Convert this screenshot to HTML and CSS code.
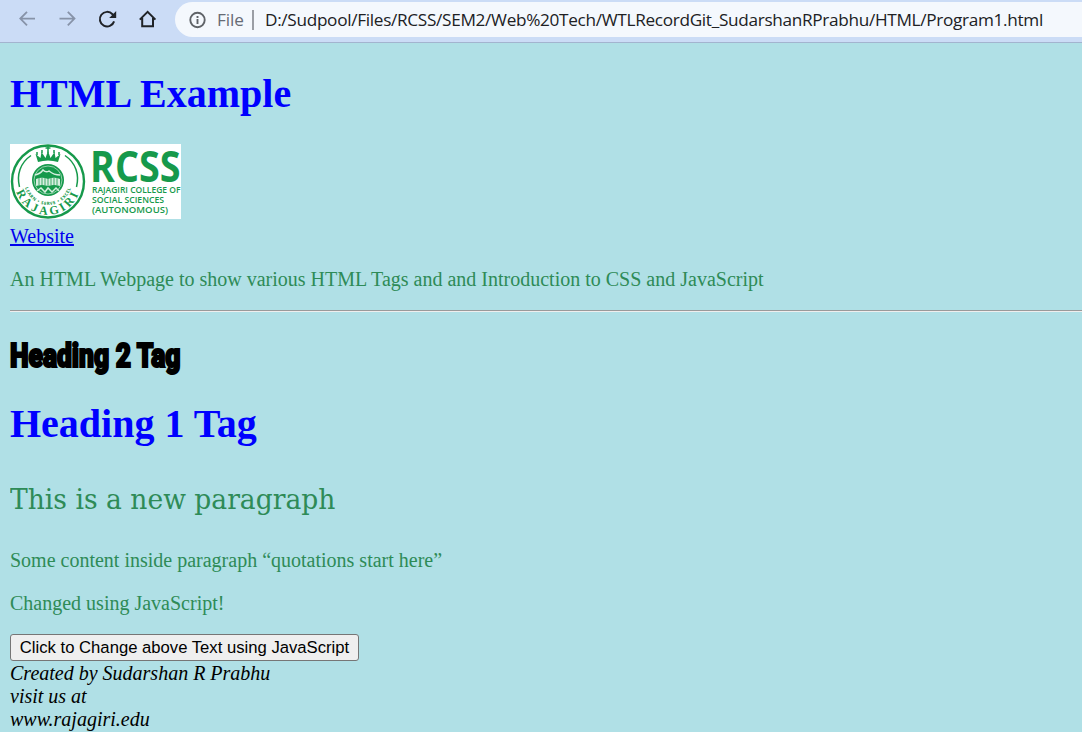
FILE: index.html
```html
<!DOCTYPE html>
<html lang="en">
<head>
<meta charset="utf-8">
<title>HTML Example</title>
<link rel="stylesheet" href="styles.css">
</head>
<body>
<header class="toolbar">
  <nav class="nav">
    <svg class="icon muted" viewBox="0 0 20 20"><path d="M17 9.600H2.500M9 2.800 2.300 9.600l6.700 6.800"/></svg>
    <svg class="icon muted" viewBox="0 0 20 20"><path d="M1.500 9.600H16M9.800 2.800l6.700 6.800-6.700 6.800"/></svg>
    <svg class="icon" viewBox="0 0 20 20"><path d="M16.100 12.4A7.3 7.3 0 1 1 14.5 5.2L15.8 6.6"/><path class="solid" d="M18.2 2v7h-7z"/></svg>
    <svg class="icon" viewBox="0 0 20 20"><path d="M1.800 10.6 9.600 2.9l7.800 7.7M4.200 9v8.2h10.8V9"/></svg>
  </nav>
  <div class="address">
    <svg class="info" viewBox="0 0 18 18"><circle cx="9.500" cy="9" r="7.200"/><path d="M9.500 8v5M9.500 5v2"/></svg>
    <span class="scheme">File</span>
    <span class="divider"></span>
    <span class="url">D:/Sudpool/Files/RCSS/SEM2/Web%20Tech/WTLRecordGit_SudarshanRPrabhu/HTML/Program1.html</span>
  </div>
</header>
<main class="page">
  <h1>HTML Example</h1>
  <svg class="logo" viewBox="0 0 171 75" role="img" aria-label="RCSS">
    <defs>
      <path id="nameArc" d="M4.800 37.500A33.200 33.200 0 0 0 71.200 37.500"/>
      <path id="mottoArc" d="M14 37A24 24 0 0 0 62 37"/>
    </defs>
    <rect class="paper" width="171" height="75"/>
    <circle class="ring" cx="38" cy="37.5" r="36"/>
    <path class="arc" d="M21 11.5C10 19 6.5 31 9.5 43M55 11.5C66 19 69.500 31 66.500 43"/>
    <path class="crown" d="M28 18l-2.500-8 5 4 1-6 4 6 2.500-7 2.500 7 4-6 1 6 5-4-2.500 8q-10-3-20 0z"/>
    <path class="crown-line" d="M38 2v7M35.500 4h5M27 8v3M49 8v3M32 6v3M44 6v3"/>
    <circle class="seal" cx="38" cy="36" r="16"/>
    <circle class="seal-line" cx="38" cy="36" r="14"/>
    <path class="book" d="M26 35q6-2.500 12 0q6-2.500 12 0v7q-6-2-12 0q-6-2-12 0z"/>
    <path class="book-line" d="M38 35v7M29 34v7M32 34v7M35 34v7M41 34v7M44 34v7M47 34v7"/>
    <path class="hills" d="M25 31q5-1 8-5 3 3 6 1 5 4 11 4M27 47l4-3 4 4 3-4 4 4 4-4 3 3"/>
    <text class="motto"><textPath href="#mottoArc" startOffset="50%">LEARN • SERVE • EXCEL</textPath></text>
    <text class="name"><textPath href="#nameArc" startOffset="50%">RAJAGIRI</textPath></text>
    <text class="rcss" x="80" y="37.500" textLength="90.500" lengthAdjust="spacingAndGlyphs">RCSS</text>
    <text class="sub" x="82" y="48.500" textLength="88.500" lengthAdjust="spacingAndGlyphs">RAJAGIRI COLLEGE OF</text>
    <text class="sub" x="82" y="58.500" textLength="72" lengthAdjust="spacingAndGlyphs">SOCIAL SCIENCES</text>
    <text class="sub" x="82" y="69" textLength="76" lengthAdjust="spacingAndGlyphs">(AUTONOMOUS)</text>
  </svg>
  <div class="link-row"><a href="#">Website</a></div>
  <p class="intro">An HTML Webpage to show various HTML Tags and and Introduction to CSS and JavaScript</p>
  <hr>
  <h2><span>Heading 2 Tag</span></h2>
  <h1 class="second">Heading 1 Tag</h1>
  <p class="large"><span>This is a new paragraph</span></p>
  <p>Some content inside paragraph “quotations start here”</p>
  <p class="changed">Changed using JavaScript!</p>
  <button type="button">Click to Change above Text using JavaScript</button>
  <address>Created by Sudarshan R Prabhu<br>visit us at<br>www.rajagiri.edu</address>
</main>
</body>
</html>
```
FILE: styles.css
```css
body { margin: 0; height: 732px; overflow: hidden; background: #b0e0e6; font: 20px/23px "Liberation Serif", serif; }
.toolbar { box-sizing: border-box; height: 43px; display: flex; background: #cbdcf6; border-bottom: 1px solid #a3b4cf; }
.nav { display: flex; gap: 20px; padding: 9px 17px 0 18px; }
.icon { width: 20px; height: 20px; fill: none; stroke: #202327; stroke-width: 2; }
.muted { stroke: #8793a8; stroke-width: 1.8; }
.solid { fill: #202327; stroke: none; }
.address { flex: 1; height: 35px; margin-top: 2px; display: flex; align-items: center; background: #f4f8fd; border-radius: 18px 0 0 18px; font: 17.2px/35px "Open Sans", sans-serif; white-space: nowrap; overflow: hidden; }
.info { width: 18px; height: 18px; margin: 0 11px 0 13px; fill: none; stroke: #5f6368; stroke-width: 1.9; }
.scheme { width: 35px; color: #666b75; letter-spacing: -0.1px; }
.divider { width: 2px; height: 20px; background: #9a9ea5; margin-right: 11px; }
.url { color: #202124; letter-spacing: -0.31px; }
.page { padding: 0 0 0 10px; }
h1 { margin: 28px 0 27px; font-size: 40px; line-height: 46px; color: #00f; }
.logo { display: block; width: 171px; height: 75px; }
.paper { fill: #fff; }
.ring { fill: none; stroke: #16994b; stroke-width: 2.4; }
.arc, .crown-line, .seal-line, .book-line, .hills { fill: none; stroke: #16994b; stroke-width: 1.5; }
.crown, .seal { fill: #16994b; }
.seal-line { stroke: #b3dfc4; stroke-width: .8; }
.book { fill: #d8efe0; }
.book-line { stroke-width: .8; }
.hills { stroke: #d8efe0; }
.motto, .name, .rcss, .sub { fill: #16994b; font-family: "Open Sans", sans-serif; }
.motto { font-size: 4.4px; font-weight: 700; text-anchor: middle; letter-spacing: .6px; }
.name { font-family: "Liberation Serif", serif; font-size: 12px; font-weight: 700; text-anchor: middle; letter-spacing: 3px; }
.rcss { font-size: 43px; font-weight: 700; }
.sub { font-size: 9.5px; font-weight: 600; }
.link-row { margin-top: 6px; }
a { color: #00e; }
p { margin: 20px 0; color: #2e8b57; }
hr { margin: 19px 0 0; border: 0; border-top: 1px solid #9a9a9a; border-bottom: 1px solid #eee; }
.intro { margin-bottom: 19px; }
h2 { margin: 25px 0 0; height: 39px; font: 900 33px/37px Roboto, sans-serif; -webkit-text-stroke: 2.2px #000; white-space: nowrap; }
h2 span { display: inline-block; transform-origin: 0 50%; transform: scaleX(.8); }
.second { margin: 25px 0 0; }
.large { margin: 35px 0 0; height: 36px; font: 28px/36px "DejaVu Serif", serif; white-space: nowrap; }
.large span { display: inline-block; transform-origin: 0 50%; transform: scaleX(.949); }
.large + p { margin: 31px 0 20px; }
.changed { margin-bottom: 19px; }
button { box-sizing: border-box; display: block; width: 349px; height: 27px; padding: 0; border: 1px solid #767676; border-radius: 3px; background: #efefef; color: #000; font: 16.667px/24px "Liberation Sans", sans-serif; white-space: nowrap; }
address { padding-top: 1px; font-style: italic; }
```
